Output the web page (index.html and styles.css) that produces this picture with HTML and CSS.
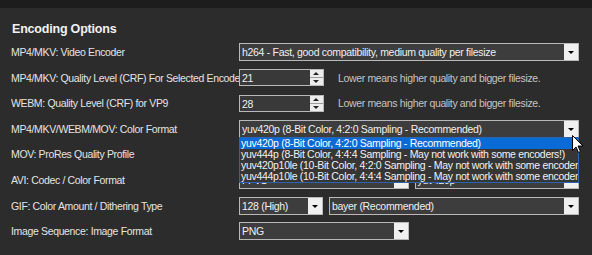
FILE: index.html
```html
<!DOCTYPE html>
<html>
  <head>
    <meta charset="UTF-8" />
    <title>Encoding Options</title>
    <link rel="stylesheet" href="styles.css">
  </head>
  <body>
    <div class="topbar"></div>
    <main class="panel">
      <h2 class="title">Encoding Options</h2>

      <div class="rows">
        <div class="row">
          <span class="label">MP4/MKV: Video Encoder</span>
          <div class="combo w-full">
            <span class="value">h264 - Fast, good compatibility, medium quality per filesize</span>
            <i class="arrow"></i>
          </div>
        </div>

        <div class="row">
          <span class="label">MP4/MKV: Quality Level (CRF) For Selected Encoder</span>
          <div class="spin">
            <span class="value">21</span>
            <i class="spin-btns"><b class="up"></b><b class="down"></b></i>
          </div>
          <span class="hint">Lower means higher quality and bigger filesize.</span>
        </div>

        <div class="row">
          <span class="label">WEBM: Quality Level (CRF) for VP9</span>
          <div class="spin">
            <span class="value">28</span>
            <i class="spin-btns"><b class="up"></b><b class="down"></b></i>
          </div>
          <span class="hint">Lower means higher quality and bigger filesize.</span>
        </div>

        <div class="row">
          <span class="label">MP4/MKV/WEBM/MOV: Color Format</span>
          <div class="combo w-full open">
            <span class="value">yuv420p (8-Bit Color, 4:2:0 Sampling - Recommended)</span>
            <i class="arrow"></i>
            <ul class="dropdown">
              <li class="selected">yuv420p (8-Bit Color, 4:2:0 Sampling - Recommended)</li>
              <li>yuv444p (8-Bit Color, 4:4:4 Sampling - May not work with some encoders!)</li>
              <li>yuv420p10le (10-Bit Color, 4:2:0 Sampling - May not work with some encoders!)</li>
              <li>yuv444p10le (10-Bit Color, 4:4:4 Sampling - May not work with some encoders!)</li>
            </ul>
            <svg class="cursor" width="12" height="19" viewBox="0 0 12 19">
              <path d="M0.5 0.5 L0.5 15.5 L4 12 L6.5 17.5 L8.5 16.5 L6 11 L11 11 Z" fill="#fff" stroke="#000" stroke-width="1" />
            </svg>
          </div>
        </div>

        <div class="row">
          <span class="label">MOV: ProRes Quality Profile</span>
          <div class="combo w-half">
            <span class="value">HQ</span>
            <i class="arrow"></i>
          </div>
        </div>

        <div class="row">
          <span class="label">AVI: Codec / Color Format</span>
          <div class="combo w-half">
            <span class="value">FFV1</span>
            <i class="arrow"></i>
          </div>
          <div class="combo w-avi2">
            <span class="value">yuv420p</span>
            <i class="arrow"></i>
          </div>
        </div>

        <div class="row">
          <span class="label">GIF: Color Amount / Dithering Type</span>
          <div class="combo w-small">
            <span class="value">128 (High)</span>
            <i class="arrow"></i>
          </div>
          <div class="combo w-gif2">
            <span class="value">bayer (Recommended)</span>
            <i class="arrow"></i>
          </div>
        </div>

        <div class="row">
          <span class="label">Image Sequence: Image Format</span>
          <div class="combo w-half">
            <span class="value">PNG</span>
            <i class="arrow"></i>
          </div>
        </div>
      </div>
    </main>
  </body>
</html>
```

FILE: styles.css
```css
body {
  margin: 0;
  height: 255px;
  overflow: hidden;
  background-color: #2c2c2c;
  color: #e4e4e4;
  font-family: "Liberation Sans", Arial, sans-serif;
  font-size: 10.5px;
}

.topbar {
  height: 8px;
  background-color: #1d1d1d;
}

.panel {
  padding: 0 13px 0 11px;
}

.title {
  margin: 0;
  padding: 13px 0 0 1px;
  height: 22px;
  line-height: 16px;
  font-size: 12.5px;
  font-weight: bold;
  letter-spacing: -0.2px;
  color: #f2f2f2;
}

.rows {
  display: flex;
  flex-direction: column;
  gap: 7.6px;
}

.row {
  display: flex;
  align-items: center;
  height: 18px;
}

.label {
  flex: none;
  width: 228px;
  overflow: hidden;
  white-space: nowrap;
  letter-spacing: -0.35px;
}

/* combo boxes */
.combo,
.spin {
  position: relative;
  box-sizing: border-box;
  height: 18px;
  display: flex;
  align-items: stretch;
  border: 1px solid #b9b9b9;
  background-color: #3d3d3d;
  color: #f0f0f0;
}

.combo + .combo {
  margin-left: 6px;
}

.value {
  flex: 1;
  padding-left: 2px;
  line-height: 16px;
  overflow: hidden;
  white-space: nowrap;
  letter-spacing: -0.3px;
}

.arrow {
  flex: none;
  width: 14px;
  background-color: #f0f0f0;
  position: relative;
}
.arrow::after {
  content: "";
  position: absolute;
  left: 4px;
  top: 7px;
  border-left: 3px solid transparent;
  border-right: 3px solid transparent;
  border-top: 3px solid #000;
}

.w-full {
  width: 340px;
}
.w-half {
  width: 170px;
}
.w-avi2 {
  width: 165px;
}
.w-small {
  width: 84px;
}
.w-gif2 {
  width: 250px;
}

/* spin boxes */
.spin {
  width: 85px;
  height: 17px;
  background-color: #393939;
}

.spin-btns {
  flex: none;
  width: 13px;
  display: flex;
  flex-direction: column;
  background-color: #ececec;
}
.spin-btns b {
  flex: 1;
  position: relative;
}
.spin-btns .up {
  border-bottom: 1px solid #9a9a9a;
}
.spin-btns .up::after,
.spin-btns .down::after {
  content: "";
  position: absolute;
  left: 3px;
  border-left: 3px solid transparent;
  border-right: 3px solid transparent;
}
.spin-btns .up::after {
  top: 2px;
  border-bottom: 3px solid #222;
}
.spin-btns .down::after {
  top: 2px;
  border-top: 3px solid #222;
}

.hint {
  margin-left: 14px;
  color: #c4c4c4;
  white-space: nowrap;
  letter-spacing: -0.35px;
}

/* open dropdown list */
.dropdown {
  position: absolute;
  z-index: 2;
  top: 16px;
  left: -1px;
  width: 340px;
  box-sizing: border-box;
  margin: 0;
  padding: 0;
  list-style: none;
  border: 1px solid #2a63b0;
  background-color: #363636;
  overflow: hidden;
}
.dropdown li {
  height: 11px;
  line-height: 11px;
  padding-left: 1px;
  white-space: nowrap;
  color: #f2f2f2;
  letter-spacing: -0.3px;
}
.dropdown li.selected {
  background-color: #0a6ad6;
  color: #ffffff;
}

.cursor {
  position: absolute;
  z-index: 3;
  left: 332px;
  top: 14px;
}
```
